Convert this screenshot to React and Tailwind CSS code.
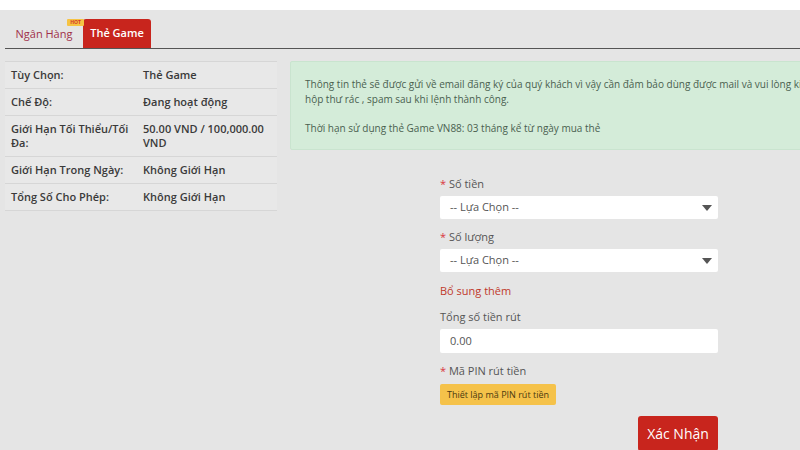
const rows = [
  ['Tùy Chọn:', 'Thẻ Game'],
  ['Chế Độ:', 'Đang hoạt động'],
  ['Giới Hạn Tối Thiểu/Tối Đa:', '50.00 VND / 100,000.00 VND'],
  ['Giới Hạn Trong Ngày:', 'Không Giới Hạn'],
  ['Tổng Số Cho Phép:', 'Không Giới Hạn'],
];

function Caret() {
  return (
    <svg width="10" height="6" viewBox="0 0 10 6" className="text-[#555]">
      <path d="M0 0 L10 0 L5 6 Z" fill="currentColor" />
    </svg>
  );
}

function SelectBox() {
  return (
    <div className="h-[23px] bg-white rounded-[2px] flex items-center justify-between pl-[10px] pr-[6px] text-[11px] text-[#555]">
      <span>-- Lựa Chọn --</span>
      <Caret />
    </div>
  );
}

function Label({ children, required, tight }) {
  return (
    <div className={'text-[11px] text-[#555] leading-[14px] ' + (tight ? 'mb-[2px]' : 'mb-[5px]')}>
      {required && <span className="text-[#d9363e]">* </span>}
      {children}
    </div>
  );
}

export default function App() {
  return (
    <div
      className="w-[800px] h-[450px] overflow-hidden bg-[#e5e5e5]"
      style={{ fontFamily: '"Open Sans", "Noto Sans", sans-serif' }}
    >
      <div className="h-[10px] bg-white" />

      <div className="ml-[5px] h-[39px] border-b border-[#555] flex items-end">
        <div className="relative w-[78px] h-[28px] flex items-center justify-center text-[11px] text-[#a0304a]">
          Ngân Hàng
          <span className="absolute right-[-1px] top-[-1px] bg-[#f6c343] text-[#d2352b] text-[5px] font-bold leading-[7px] px-[3px] rounded-[1px]">
            HOT
          </span>
        </div>
        <div className="w-[68px] h-[29px] bg-[#c8251d] rounded-t-[3px] flex items-center justify-center text-[11px] font-semibold text-white">
          Thẻ Game
        </div>
      </div>

      <div className="flex mt-[12px]">
        <div className="ml-[5px] w-[272px] shrink-0 border-t border-[#d6d6d6]">
          {rows.map(([k, v]) => (
            <div
              key={k}
              className="flex border-b border-[#d6d6d6] bg-[#e8e8e8] px-[6px] py-[6px] text-[11px] font-semibold text-[#3a3a3a] leading-[14px]"
            >
              <div className="w-[132px] pr-[8px]">{k}</div>
              <div className="flex-1 pr-[4px]">{v}</div>
            </div>
          ))}
        </div>

        <div className="ml-[13px] w-[570px] shrink-0">
          <div className="bg-[#d4ecd9] border border-[#c9e4cf] rounded-[2px] px-[14px] pt-[15px] pb-[13px] text-[10px] leading-[15px] text-[#4a5f50]">
            <p>
              Thông tin thẻ sẽ được gửi về email đăng ký của quý khách vì vậy cần đảm bảo dùng được mail và vui lòng kiểm tra hộp thư rác , spam sau khi lệnh thành công.
            </p>
            <p className="mt-[14px]">Thời hạn sử dụng thẻ Game VN88: 03 tháng kể từ ngày mua thẻ</p>
          </div>

          <div className="ml-[150px] w-[278px] mt-[27px]">
            <Label required>Số tiền</Label>
            <SelectBox />

            <div className="mt-[11px]" />
            <Label required>Số lượng</Label>
            <SelectBox />

            <div className="mt-[12px] text-[11px] text-[#c0392b] leading-[14px]">Bổ sung thêm</div>

            <div className="mt-[12px]" />
            <Label>Tổng số tiền rút</Label>
            <div className="h-[24px] bg-white rounded-[2px] flex items-center pl-[10px] text-[11px] text-[#555]">
              0.00
            </div>

            <div className="mt-[11px]" />
            <Label required tight>Mã PIN rút tiền</Label>
            <div className="inline-flex h-[21px] items-center px-[7px] bg-[#f5c24a] rounded-[2px] text-[9px] text-[#4a3a10]">
              Thiết lập mã PIN rút tiền
            </div>

            <div className="flex justify-end mt-[11px]">
              <div className="w-[80px] h-[35px] bg-[#c8251d] rounded-[3px] flex items-center justify-center text-[14px] text-white">
                Xác Nhận
              </div>
            </div>
          </div>
        </div>
      </div>
    </div>
  );
}
